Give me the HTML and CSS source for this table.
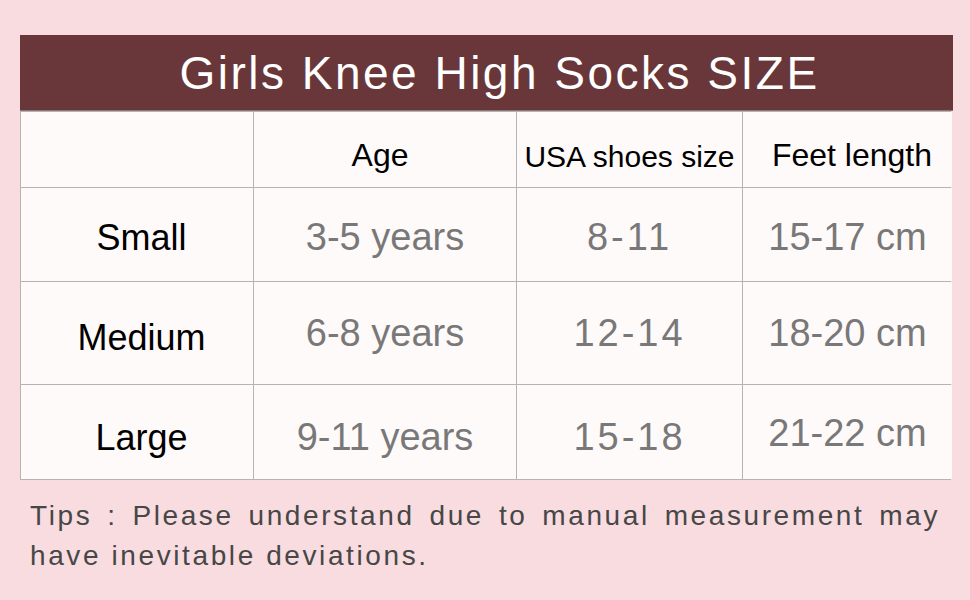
FILE: index.html
```html
<!DOCTYPE html>
<html>
<head>
<meta charset="utf-8">
<link rel="stylesheet" href="styles.css">
</head>
<body>
<div class="page">
  <div class="chart">
    <div class="title">Girls Knee High Socks SIZE</div>
    <div class="cell head"></div>
    <div class="cell head age">Age</div>
    <div class="cell head usa">USA shoes size</div>
    <div class="cell head feet">Feet length</div>

    <div class="cell label r1">Small</div>
    <div class="cell data r1">3-5 years</div>
    <div class="cell data r1 spaced">8-11</div>
    <div class="cell data r1">15-17 cm</div>

    <div class="cell label r2">Medium</div>
    <div class="cell data r2">6-8 years</div>
    <div class="cell data r2 spaced">12-14</div>
    <div class="cell data r2">18-20 cm</div>

    <div class="cell label r3">Large</div>
    <div class="cell data r3">9-11 years</div>
    <div class="cell data r3 spaced">15-18</div>
    <div class="cell data r3 raised">21-22 cm</div>
  </div>
  <p class="tips">Tips : Please understand due to manual measurement may have inevitable deviations.</p>
</div>
</body>
</html>
```

FILE: styles.css
```css
html, body {
  margin: 0;
  padding: 0;
  background: #f9dce0;
}
body {
  font-family: "Liberation Sans", Arial, sans-serif;
  width: 970px;
  height: 600px;
  overflow: hidden;
}
.page {
  padding: 35px 19px 0 20px;
}
.chart {
  width: 931px;
  display: grid;
  grid-template-columns: 232px 262px 225px 209px;
  grid-template-rows: 75px 75px 93px 102px 94px;
  gap: 1px;
  background: #b8b3b3;
  border: 1px solid #b8b3b3;
  border-top: 1px solid #7a5c5e;
  box-sizing: border-box;
}
.title {
  grid-column: 1 / -1;
  background: #69373a;
  color: #ffffff;
  font-size: 46px;
  letter-spacing: 2.5px;
  display: flex;
  align-items: center;
  justify-content: center;
  padding-left: 26px;
  margin: -1px -1px 0 -1px;
  border-bottom: 1px solid #8a7475;
}
.cell {
  background: #fffafa;
  display: flex;
  align-items: center;
  justify-content: center;
}
.head {
  font-size: 32px;
  color: #000;
  padding-top: 12px;
}
.head.age {
  padding-right: 10px;
}
.head.usa {
  font-size: 30px;
  padding-top: 14px;
}
.head.feet {
  padding-left: 9px;
}
.label {
  font-size: 36px;
  color: #000;
  padding-left: 9px;
}
.data {
  font-size: 38px;
  color: #787878;
}
.spaced {
  letter-spacing: 3px;
}
.r1 { padding-top: 6px; }
.label.r2 { padding-top: 10px; }
.data.r2 { padding-top: 0; }
.label.r3 { padding-top: 12px; }
.data.r3 { padding-top: 10px; }
.data.r3.raised { padding-top: 2px; }
.tips {
  margin: 16px 11px 0 10px;
  font-size: 28px;
  line-height: 40px;
  letter-spacing: 2.6px;
  color: #474747;
  text-align: justify;
}
```
